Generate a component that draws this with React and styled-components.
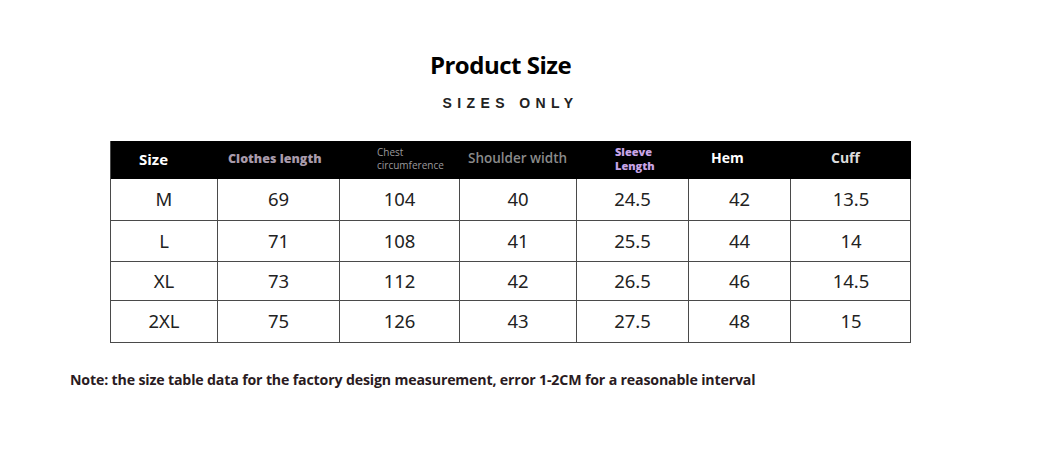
import React from 'react';
import styled, { createGlobalStyle } from 'styled-components';

const Global = createGlobalStyle`
  body { margin: 0; background: #fff; }
  * { box-sizing: border-box; }
`;

const columns = [
  { w: 106, label: 'Size', color: '#fff', size: 15, pad: 28, weight: 700 },
  { w: 122, label: 'Clothes length', color: '#a99bab', size: 12.5, pad: 11, weight: 800 },
  { w: 120, label: ['Chest', 'circumference'], color: '#9c9a9c', size: 10, pad: 38, weight: 400 },
  { w: 117, label: 'Shoulder width', color: '#8a8a8a', size: 13.5, pad: 9, weight: 600 },
  { w: 112, label: ['Sleeve', 'Length'], color: '#c8a5e6', size: 11, pad: 39, weight: 800 },
  { w: 102, label: 'Hem', color: '#fff', size: 14, pad: 23, weight: 700 },
  { w: 121, label: 'Cuff', color: '#dcdcdc', size: 14, pad: 41, weight: 700 },
];

const rows = [
  ['M', '69', '104', '40', '24.5', '42', '13.5'],
  ['L', '71', '108', '41', '25.5', '44', '14'],
  ['XL', '73', '112', '42', '26.5', '46', '14.5'],
  ['2XL', '75', '126', '43', '27.5', '48', '15'],
];
const rowHeights = [41, 41, 39, 42];

const Page = styled.div`
  width: 1051px;
  height: 452px;
  padding-top: 48px;
  font-family: 'Open Sans', 'Noto Sans', sans-serif;
`;

const Title = styled.h1`
  margin: 0;
  text-align: center;
  font-size: 24px;
  font-weight: 700;
  letter-spacing: -0.5px;
  color: #000;
  padding-right: 50px;
  line-height: 34px;
`;

const Subtitle = styled.div`
  margin-top: 13px;
  text-align: center;
  font-family: 'Liberation Sans', Arial, sans-serif;
  font-size: 14px;
  font-weight: 700;
  letter-spacing: 5.4px;
  color: #222;
  padding-right: 30px;
`;

const Table = styled.div`
  margin: 30px 0 0 110px;
  width: 801px;
  display: grid;
  grid-template-columns: ${columns.map(c => c.w + 'px').join(' ')};
  border: 1.5px solid #4a4a4a;
  border-top: none;
`;

const HeadCell = styled.div`
  background: #000;
  height: 38px;
  display: flex;
  flex-direction: column;
  justify-content: center;
  padding-left: ${p => p.$pad}px;
  padding-bottom: 3px;
  color: ${p => p.$color};
  font-size: ${p => p.$size}px;
  font-weight: ${p => p.$weight};
  line-height: ${p => (p.$size < 12 ? 1.22 : 1.2)};
  white-space: nowrap;
`;

const Cell = styled.div`
  height: ${p => p.$h}px;
  display: flex;
  align-items: center;
  justify-content: center;
  padding-bottom: 2px;
  font-family: 'Noto Sans', sans-serif;
  font-size: 18.5px;
  color: #222;
  border-left: ${p => (p.$first ? 'none' : '1.5px solid #4a4a4a')};
  border-top: ${p => (p.$top ? 'none' : '1.5px solid #4a4a4a')};
`;

const Note = styled.p`
  margin: 27px 0 0 70px;
  font-size: 14.2px;
  font-weight: 700;
  letter-spacing: -0.17px;
  color: #2a1b22;
`;

export default function App() {
  return (
    <Page>
      <Global />
      <Title>Product Size</Title>
      <Subtitle>SIZES ONLY</Subtitle>
      <Table>
        {columns.map((c, i) => (
          <HeadCell key={i} $pad={c.pad} $color={c.color} $size={c.size} $weight={c.weight}>
            {Array.isArray(c.label) ? c.label.map(l => <span key={l}>{l}</span>) : c.label}
          </HeadCell>
        ))}
        {rows.map((r, ri) =>
          r.map((v, ci) => (
            <Cell key={ri + '-' + ci} $h={rowHeights[ri]} $first={ci === 0} $top={ri === 0}>
              {v}
            </Cell>
          ))
        )}
      </Table>
      <Note>Note: the size table data for the factory design measurement, error 1-2CM for a reasonable interval</Note>
    </Page>
  );
}
